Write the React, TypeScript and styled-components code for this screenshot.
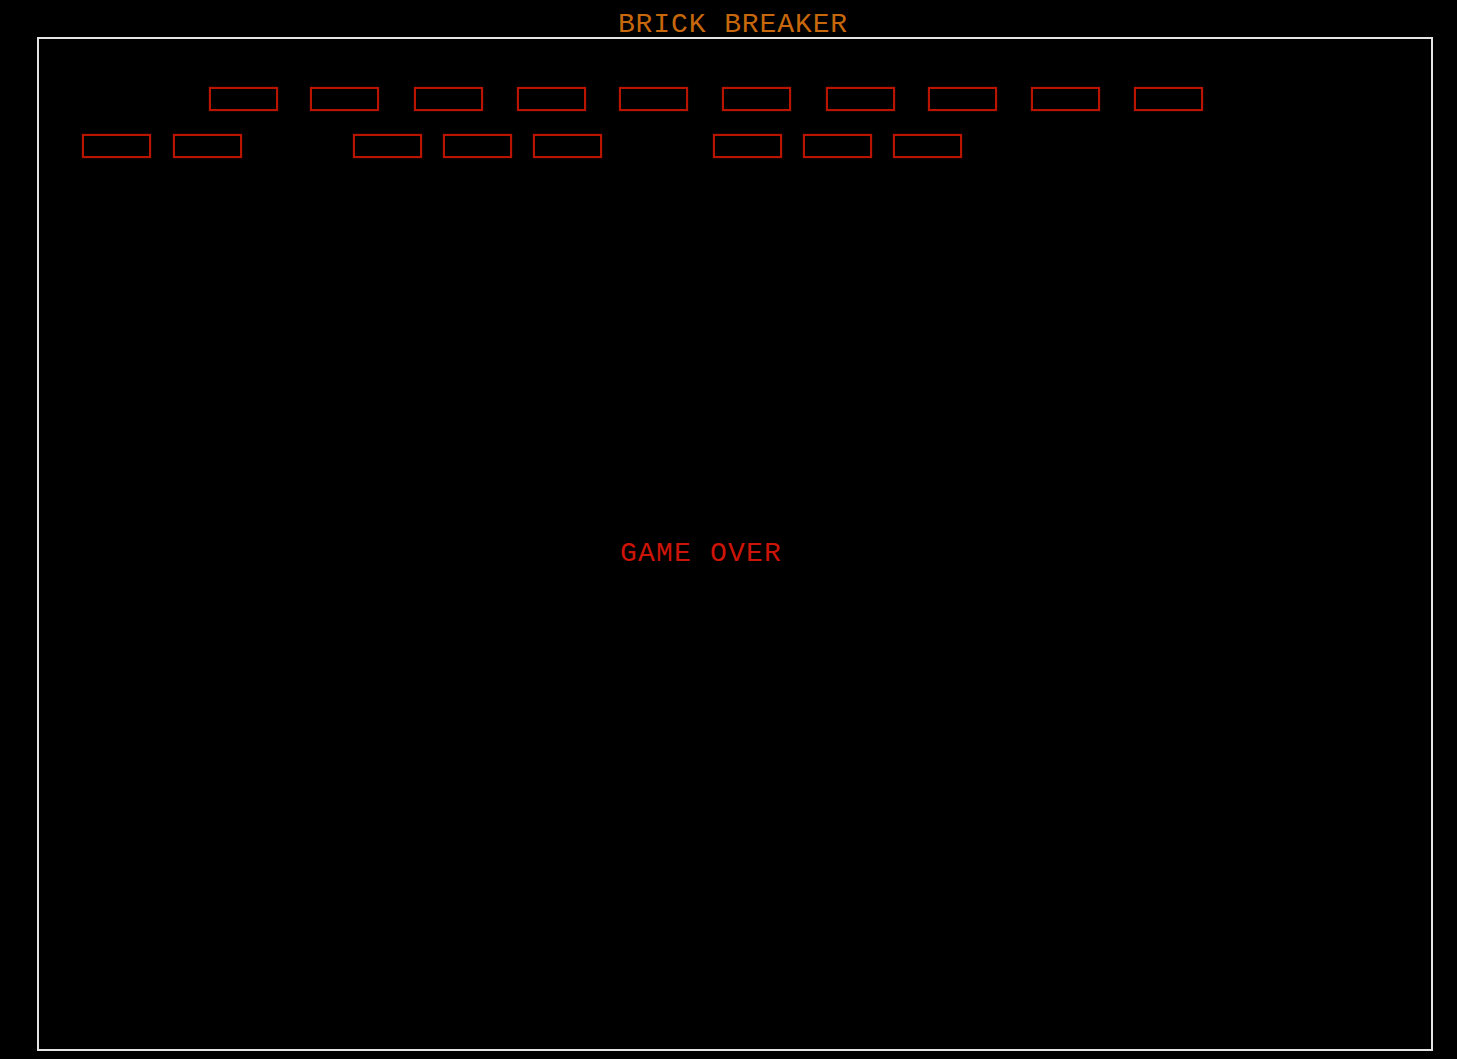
import React from "react";
import styled, { createGlobalStyle } from "styled-components";

const GlobalStyle = createGlobalStyle`
  html, body {
    margin: 0;
    padding: 0;
    background: #000;
  }
  body {
    font-family: "Liberation Mono", "DejaVu Sans Mono", monospace;
  }
`;

const Page = styled.div`
  width: 1457px;
  height: 1059px;
  background: #000;
  overflow: hidden;
`;

const Title = styled.h1`
  margin: 0;
  box-sizing: border-box;
  height: 37px;
  padding: 11px 0 0 9px;
  font-family: "Liberation Mono", "DejaVu Sans Mono", monospace;
  font-weight: normal;
  font-size: 28px;
  line-height: 28px;
  letter-spacing: 0.9px;
  text-align: center;
  color: #c8680c;
`;

const Field = styled.div`
  position: relative;
  box-sizing: border-box;
  margin-left: 37px;
  width: 1396px;
  height: 1014px;
  border: 2px solid #e4e4e4;
`;

const Brick = styled.div<{ $x: number; $y: number }>`
  position: absolute;
  left: ${(p) => p.$x}px;
  top: ${(p) => p.$y}px;
  box-sizing: border-box;
  width: 69px;
  height: 24px;
  border: 2px solid #b81400;
  box-shadow: 0 0 1px rgba(184, 20, 0, 0.8);
`;

const Message = styled.div`
  position: absolute;
  left: 581px;
  top: 501px;
  font-family: "Liberation Mono", "DejaVu Sans Mono", monospace;
  font-size: 28px;
  line-height: 28px;
  letter-spacing: 1.2px;
  color: #cc1408;
  white-space: nowrap;
`;

const row1 = [170, 271, 375, 478, 580, 683, 787, 889, 992, 1095];
const row2 = [43, 134, 314, 404, 494, 674, 764, 854];

export default function App() {
  return (
    <Page>
      <GlobalStyle />
      <Title>BRICK BREAKER</Title>
      <Field>
        {row1.map((x) => (
          <Brick key={`a${x}`} $x={x} $y={48} />
        ))}
        {row2.map((x) => (
          <Brick key={`b${x}`} $x={x} $y={95} />
        ))}
        <Message>GAME OVER</Message>
      </Field>
    </Page>
  );
}
